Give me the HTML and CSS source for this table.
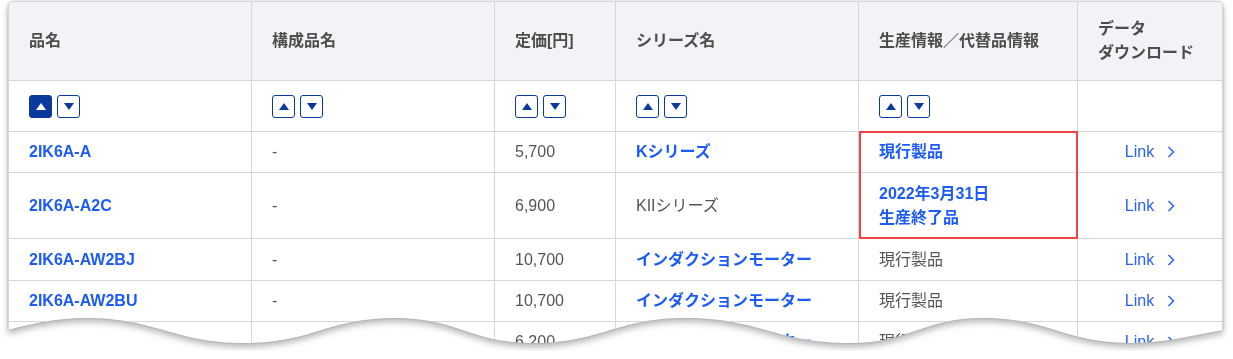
FILE: index.html
```html
<!DOCTYPE html>
<html lang="ja">
<head>
<meta charset="utf-8">
<title>製品一覧</title>
<link rel="stylesheet" href="styles.css">
</head>
<body>
<div class="page">
  <div class="paper">
    <div class="sheet">
      <table class="spec">
        <colgroup>
          <col class="c-name">
          <col class="c-part">
          <col class="c-price">
          <col class="c-series">
          <col class="c-status">
          <col class="c-dl">
        </colgroup>
        <thead>
          <tr class="head">
            <th>品名</th>
            <th>構成品名</th>
            <th>定価[円]</th>
            <th>シリーズ名</th>
            <th>生産情報／代替品情報</th>
            <th>データ<br>ダウンロード</th>
          </tr>
          <tr class="sort">
            <td><span class="sort-btns"><button class="sort-btn is-active" aria-label="昇順"><svg viewBox="0 0 10 7" width="10" height="7"><polygon points="5,0 10,7 0,7"/></svg></button><button class="sort-btn" aria-label="降順"><svg viewBox="0 0 10 7" width="10" height="7"><polygon points="0,0 10,0 5,7"/></svg></button></span></td>
            <td><span class="sort-btns"><button class="sort-btn" aria-label="昇順"><svg viewBox="0 0 10 7" width="10" height="7"><polygon points="5,0 10,7 0,7"/></svg></button><button class="sort-btn" aria-label="降順"><svg viewBox="0 0 10 7" width="10" height="7"><polygon points="0,0 10,0 5,7"/></svg></button></span></td>
            <td><span class="sort-btns"><button class="sort-btn" aria-label="昇順"><svg viewBox="0 0 10 7" width="10" height="7"><polygon points="5,0 10,7 0,7"/></svg></button><button class="sort-btn" aria-label="降順"><svg viewBox="0 0 10 7" width="10" height="7"><polygon points="0,0 10,0 5,7"/></svg></button></span></td>
            <td><span class="sort-btns"><button class="sort-btn" aria-label="昇順"><svg viewBox="0 0 10 7" width="10" height="7"><polygon points="5,0 10,7 0,7"/></svg></button><button class="sort-btn" aria-label="降順"><svg viewBox="0 0 10 7" width="10" height="7"><polygon points="0,0 10,0 5,7"/></svg></button></span></td>
            <td><span class="sort-btns"><button class="sort-btn" aria-label="昇順"><svg viewBox="0 0 10 7" width="10" height="7"><polygon points="5,0 10,7 0,7"/></svg></button><button class="sort-btn" aria-label="降順"><svg viewBox="0 0 10 7" width="10" height="7"><polygon points="0,0 10,0 5,7"/></svg></button></span></td>
            <td></td>
          </tr>
        </thead>
        <tbody>
          <tr class="r-41">
            <td><a class="lk-bold" href="#">2IK6A-A</a></td>
            <td>-</td>
            <td>5,700</td>
            <td><a class="lk-bold" href="#">Kシリーズ</a></td>
            <td><a class="lk-bold" href="#">現行製品</a></td>
            <td class="dl"><a class="lk" href="#">Link<svg class="chev" viewBox="0 0 8 12" width="8" height="12"><polyline points="1.5,1 6.5,6 1.5,11"/></svg></a></td>
          </tr>
          <tr class="r-66">
            <td><a class="lk-bold" href="#">2IK6A-A2C</a></td>
            <td>-</td>
            <td>6,900</td>
            <td>KIIシリーズ</td>
            <td><a class="lk-bold" href="#">2022年3月31日<br>生産終了品</a></td>
            <td class="dl"><a class="lk" href="#">Link<svg class="chev" viewBox="0 0 8 12" width="8" height="12"><polyline points="1.5,1 6.5,6 1.5,11"/></svg></a></td>
          </tr>
          <tr class="r-42">
            <td><a class="lk-bold" href="#">2IK6A-AW2BJ</a></td>
            <td>-</td>
            <td>10,700</td>
            <td><a class="lk-bold" href="#">インダクションモーター</a></td>
            <td>現行製品</td>
            <td class="dl"><a class="lk" href="#">Link<svg class="chev" viewBox="0 0 8 12" width="8" height="12"><polyline points="1.5,1 6.5,6 1.5,11"/></svg></a></td>
          </tr>
          <tr class="r-41">
            <td><a class="lk-bold" href="#">2IK6A-AW2BU</a></td>
            <td>-</td>
            <td>10,700</td>
            <td><a class="lk-bold" href="#">インダクションモーター</a></td>
            <td>現行製品</td>
            <td class="dl"><a class="lk" href="#">Link<svg class="chev" viewBox="0 0 8 12" width="8" height="12"><polyline points="1.5,1 6.5,6 1.5,11"/></svg></a></td>
          </tr>
          <tr class="r-41">
            <td><a class="lk-bold" href="#">2IK6A-AW2BE</a></td>
            <td>-</td>
            <td>6,200</td>
            <td><a class="lk-bold" href="#">インダクションモーター</a></td>
            <td>現行製品</td>
            <td class="dl"><a class="lk" href="#">Link<svg class="chev" viewBox="0 0 8 12" width="8" height="12"><polyline points="1.5,1 6.5,6 1.5,11"/></svg></a></td>
          </tr>
        </tbody>
      </table>
      <div class="highlight"></div>
    </div>
  </div>
</div>
</body>
</html>
```

FILE: styles.css
```css
html, body {
  margin: 0;
  padding: 0;
  background: #ffffff;
}

body {
  font-family: "Liberation Sans", "Noto Sans CJK JP", sans-serif;
  font-size: 16px;
  color: #555555;
}

.page {
  padding: 1px 0 0 8px;
}

.paper {
  width: 1215px;
  filter: drop-shadow(0 0 1px rgba(0, 0, 0, 0.18)) drop-shadow(0 4px 3px rgba(0, 0, 0, 0.28));
}

.sheet {
  position: relative;
  box-sizing: border-box;
  width: 1215px;
  height: 350px;
  border: 1px solid #d3d6dc;
  border-bottom: none;
  border-radius: 5px 5px 0 0;
  overflow: hidden;
  background: #ffffff;
  clip-path: path("M0 0 H1215 V329 C1190 333 1160 342 1122 342 C1056 342 1041 317 975 317 C915 317 902 342 842 342 C768 342 751 317 677 317 C609 317 593 342 525 342 C463 342 449 317 387 317 C319 317 305 342 237 342 C165 342 149 317 77 317 C50 317 25 322 0 329 Z");
}

.spec {
  width: 1213px;
  table-layout: fixed;
  border-collapse: separate;
  border-spacing: 0;
}

.c-name { width: 243px; }
.c-part { width: 243px; }
.c-price { width: 121px; }
.c-series { width: 243px; }
.c-status { width: 219px; }
.c-dl { width: 144px; }

.spec th,
.spec td {
  box-sizing: border-box;
  padding: 0 10px 0 20px;
  border-right: 1px solid #d3d6dc;
  border-bottom: 1px solid #d3d6dc;
  text-align: left;
  vertical-align: middle;
  line-height: 24px;
  white-space: nowrap;
}

.spec th:last-child,
.spec td:last-child {
  border-right: none;
}

.head {
  height: 79px;
}

.head th {
  background: #f2f3f7;
  color: #4d4d4d;
  font-weight: bold;
}

.sort {
  height: 51px;
}

.r-41 { height: 41px; }
.r-42 { height: 42px; }
.r-66 { height: 66px; }

.sort-btns {
  display: flex;
  gap: 5px;
}

.sort-btn {
  box-sizing: border-box;
  width: 23px;
  height: 23px;
  padding: 0;
  margin: 0;
  border: 1px solid #0b3a9c;
  border-radius: 3px;
  background: #ffffff;
  display: flex;
  align-items: center;
  justify-content: center;
  fill: #0b3a9c;
}

.sort-btn.is-active {
  background: #0b3a9c;
  fill: #ffffff;
}

.lk-bold {
  color: #1d5bf6;
  font-weight: bold;
  text-decoration: none;
}

.lk {
  color: #2a62f5;
  text-decoration: none;
  display: inline-flex;
  align-items: center;
}

.spec td.dl {
  text-align: center;
  padding: 0;
}

.chev {
  margin-left: 13px;
  fill: none;
  stroke: #2a62f5;
  stroke-width: 1.5;
}

.highlight {
  position: absolute;
  left: 850px;
  top: 129px;
  width: 219px;
  height: 108px;
  box-sizing: border-box;
  border: 2px solid #f04444;
  pointer-events: none;
}
```
